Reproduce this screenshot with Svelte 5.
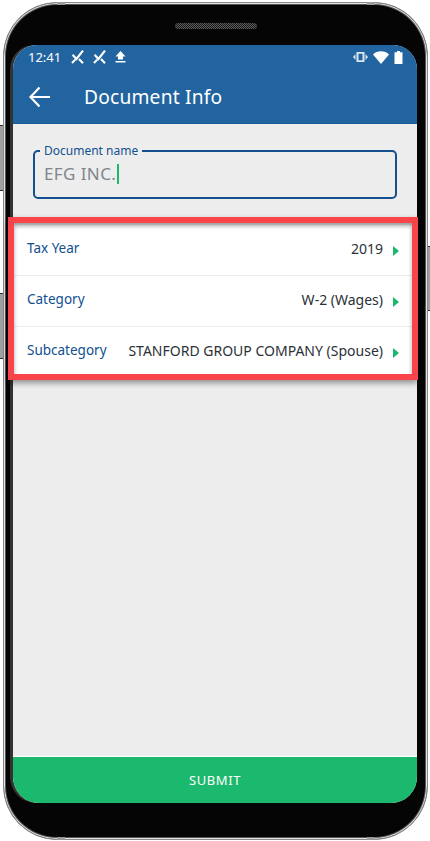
<script lang="ts">
  const rows = [
    { label: 'Tax Year', value: '2019' },
    { label: 'Category', value: 'W-2 (Wages)' },
    { label: 'Subcategory', value: 'STANFORD GROUP COMPANY (Spouse)' }
  ]
</script>

<div class="phone">
  <span class="side-btn vol"></span>
  <span class="side-btn power"></span>
  <span class="side-btn left2"></span>
  <span class="band top-l"></span>
  <span class="band top-r"></span>
  <span class="band bot-l"></span>
  <span class="band bot-r"></span>
  <div class="speaker"></div>

  <div class="screen">
    <header>
      <div class="status">
        <span class="time">12:41</span>
        <svg width="13" height="14" viewBox="0 0 13 14" fill="none" stroke="#fff" stroke-width="2.100"><path d="M12 .6 5.400 9 1.600 4.800 M1 13l3.200-3.400 M8 9l4 4.200"/></svg>
        <svg class="x2" width="13" height="14" viewBox="0 0 13 14" fill="none" stroke="#fff" stroke-width="2.100"><path d="M12 .6 5.400 9 1.600 4.800 M1 13l3.200-3.400 M8 9l4 4.200"/></svg>
        <svg class="upload" width="11" height="12" viewBox="0 0 11 12" fill="#fff"><path d="M5.500 0 10.500 5.500H8V8.500H3V5.500H.5z M.5 10h10v1.600H.5z"/></svg>
        <span class="spacer"></span>
        <svg width="15" height="10" viewBox="0 0 15 10" fill="#dbe6f1"><path fill-rule="evenodd" d="M3.500 0h8v10h-8z M5.500 1.800v6.400h4V1.800z"/><path d="M0 5l2.500-3v6z M15 5l-2.500-3v6z"/></svg>
        <svg width="16" height="13" viewBox="0 0 16 13" fill="#fff"><path d="M0 3.400C2 1.400 4.800.2 8 .2s6 1.200 8 3.200L8 13z"/></svg>
        <svg width="9" height="13" viewBox="0 0 9 13" fill="#fff"><path d="M3 0h3v1.200h2.500V13H.5V1.200H3z"/></svg>
      </div>
      <div class="toolbar">
        <svg width="24" height="24" viewBox="0 0 24 24" fill="none" stroke="#fff" stroke-width="2.200"><path d="M22 12H2.500 M11.500 2.500 2.500 12l9 9.500"/></svg>
        <h1>Document Info</h1>
      </div>
    </header>

    <main>
      <div class="field">
        <span class="field-label">Document name</span>
        <div class="field-value">EFG INC.<span class="caret"></span></div>
      </div>

      <ul class="rows">
        {#each rows as row}
          <li>
            <span class="row-label">{row.label}</span>
            <span class="row-value">{row.value}</span>
            <span class="arrow"></span>
          </li>
        {/each}
      </ul>
    </main>

    <button class="submit">SUBMIT</button>
  </div>

  <div class="highlight"></div>
</div>

<style>
  :global(body) {
    margin: 0;
    background: #fff;
    font-family: 'Noto Sans', sans-serif;
  }

  .phone {
    position: relative;
    box-sizing: border-box;
    width: 425px;
    height: 838px;
    margin: 2px 0 0 3px;
    padding: 42px 10px 33px 9px;
    background: #050505;
    border: 1px solid #8a8a8a;
    border-radius: 54px;
    box-shadow: inset 0 0 0 1px #e4e4e4, inset 0 0 0 2px #555;
  }

  .side-btn {
    position: absolute;
    width: 3px;
    background: #a0a0a0;
    border-top: 1px solid #333;
    border-bottom: 1px solid #333;
  }

  .vol {
    left: -4px;
    top: 122px;
    height: 64px;
  }

  .left2 {
    left: -4px;
    top: 290px;
    height: 64px;
  }

  .power {
    right: -3px;
    top: 243px;
    height: 63px;
    width: 2px;
  }

  .band {
    position: absolute;
    width: 8px;
    height: 3px;
    background: #9a9a9a;
  }

  .top-l {
    left: 53px;
    top: -1px;
  }

  .top-r {
    right: 52px;
    top: -1px;
  }

  .bot-l {
    left: 53px;
    bottom: -1px;
  }

  .bot-r {
    right: 52px;
    bottom: -1px;
  }

  .speaker {
    position: absolute;
    left: 171px;
    top: 20px;
    width: 82px;
    height: 6px;
    border-radius: 3px;
    background: repeating-conic-gradient(#5a5a5a 0 25%, #1a1a1a 0 50%) 0 0 / 2px 2px;
  }

  .screen {
    display: flex;
    flex-direction: column;
    height: 758px;
    border-radius: 24px 24px 26px 26px;
    overflow: hidden;
    background: #ededed;
    box-shadow: -3px 0 0 #333;
  }

  header {
    height: 79px;
    background: #22649f;
    border-bottom: 1px solid #1b5a96;
    box-sizing: border-box;
    color: #fff;
  }

  .status {
    display: flex;
    align-items: center;
    gap: 5px;
    height: 24px;
    padding: 0 14px 0 15px;
  }

  .time {
    font-size: 13px;
    margin-right: 5px;
  }

  .x2 {
    margin-left: 4px;
  }

  .upload {
    margin-left: 4px;
  }

  .spacer {
    flex: 1;
  }

  .toolbar {
    display: flex;
    align-items: center;
    gap: 32px;
    height: 55px;
    padding-left: 15px;
  }

  h1 {
    margin: 0;
    font-size: 19.200px;
    font-weight: 400;
    letter-spacing: 0.2px;
  }

  main {
    flex: 1;
    padding-top: 26px;
  }

  .field {
    position: relative;
    box-sizing: border-box;
    height: 49px;
    margin: 0 20px;
    padding: 10px 9px 0;
    border: 2px solid #14508f;
    border-radius: 5px;
  }

  .field-label {
    position: absolute;
    left: 5px;
    top: -8px;
    padding: 0 4px;
    background: #ededed;
    color: #14508f;
    font-size: 12px;
    line-height: 14px;
  }

  .field-value {
    display: flex;
    align-items: center;
    color: #80858c;
    font-size: 17px;
    line-height: 24px;
    letter-spacing: 0.4px;
  }

  .caret {
    width: 2px;
    height: 20px;
    margin-left: 1px;
    background: #19b86c;
  }

  .rows {
    margin: 26px 0 0;
    padding: 0;
    list-style: none;
    background: #fff;
  }

  li {
    display: flex;
    align-items: center;
    box-sizing: border-box;
    height: 51px;
    padding: 0 18px 4px 14px;
    border-bottom: 1px solid #ececec;
    font-size: 14px;
  }

  li:last-child {
    border-bottom: 0;
    height: 50px;
  }

  .row-label {
    color: #10508f;
    font-size: 13.500px;
  }

  .row-value {
    margin-left: auto;
    color: #2b3138;
  }

  .arrow {
    width: 0;
    height: 0;
    margin: 5px 0 0 10px;
    border-left: 6px solid #19b86c;
    border-top: 5px solid transparent;
    border-bottom: 5px solid transparent;
  }

  .submit {
    height: 47px;
    border: 0;
    border-top: 1px solid #fff;
    background: #1bb96d;
    color: #fff;
    font-family: inherit;
    font-size: 13px;
    letter-spacing: 0.6px;
  }

  .highlight {
    position: absolute;
    left: 4px;
    top: 214px;
    width: 398px;
    height: 151px;
    border: 6px solid #f9444a;
    box-shadow: 0 3px 6px rgba(0, 0, 0, 0.4), inset 0 3px 4px rgba(0, 0, 0, 0.35);
  }
</style>
